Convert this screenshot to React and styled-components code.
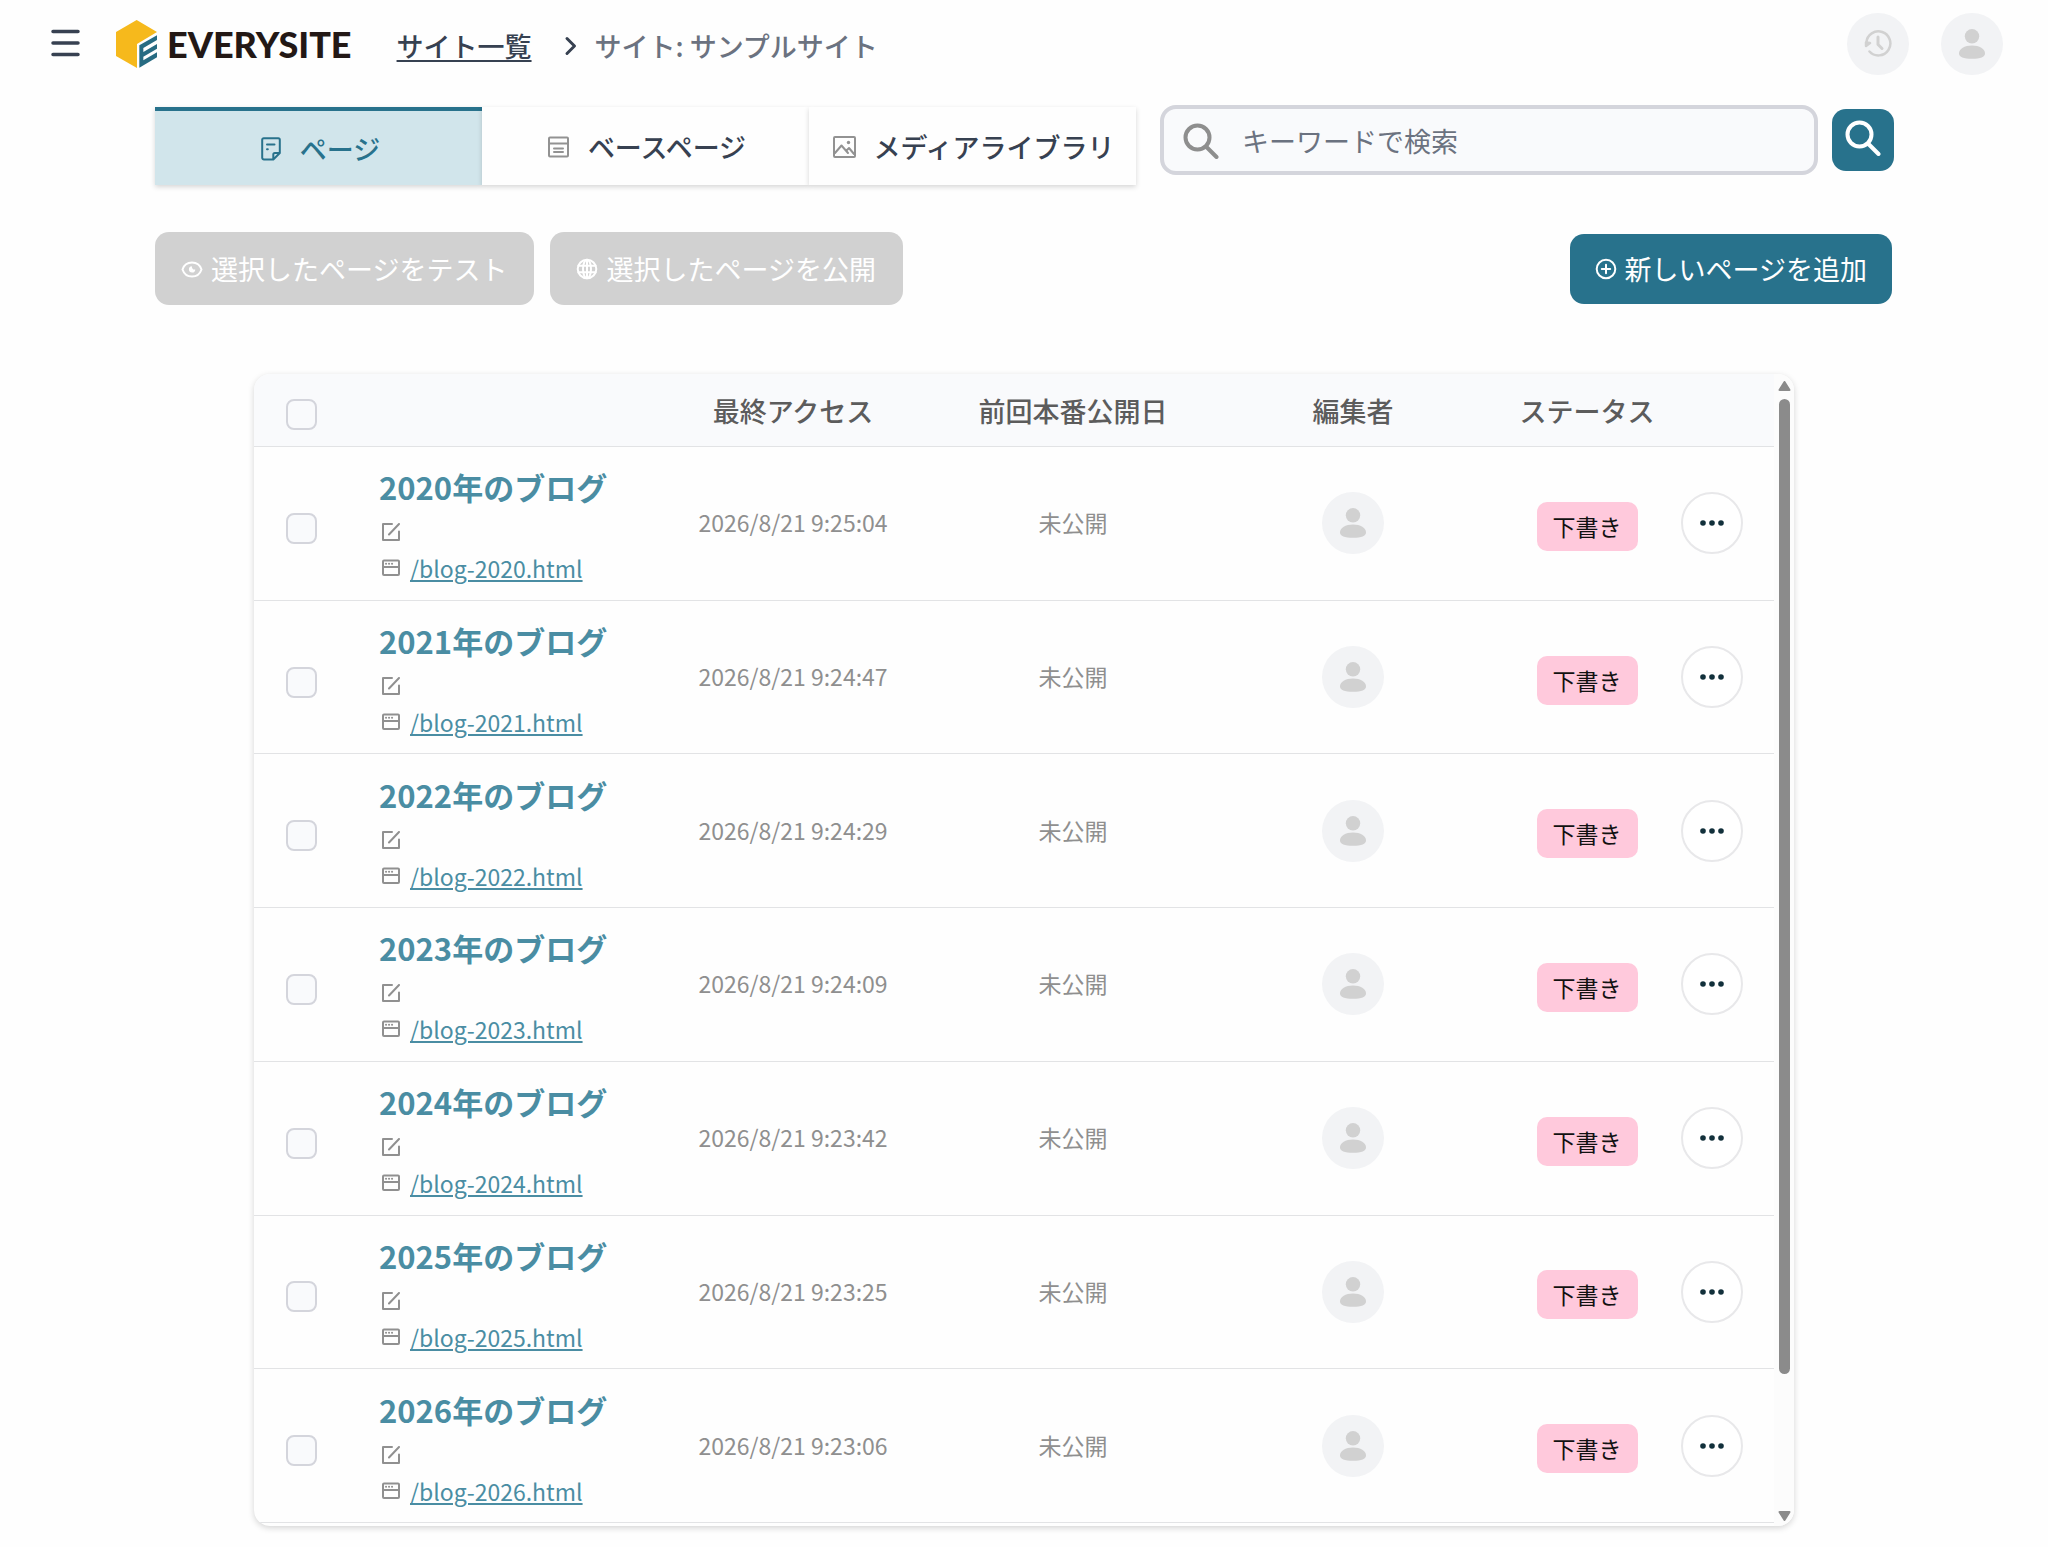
import React from "react";
import styled, { createGlobalStyle, css } from "styled-components";

const color = {
  teal: "#28728c",
  tealSoft: "#d1e5eb",
  link: "#4a8da3",
  ink: "#374151",
  slate: "#6b7280",
  grey: "#8f8f8f",
  disabled: "#d1d1d1",
  surface: "#f9fafc",
  line: "#e8e8ea",
  control: "#d4d5dc",
};

const GlobalStyle = createGlobalStyle`
  *, *::before, *::after { box-sizing: border-box; }
  body {
    margin: 0;
    background: #fefefe;
    color: ${color.ink};
    font-family: "Noto Sans CJK JP", "Noto Sans", sans-serif;
    font-size: 27px;
    line-height: 40px;
  }
  button, input { font: inherit; }
  button { cursor: pointer; }
  svg { display: block; flex: none; }
`;

const Header = styled.header`
  display: flex;
  align-items: center;
  height: 88px;
  padding: 0 45px 0 50px;
`;

const MenuButton = styled.button`
  padding: 0 0 2px;
  border: 0;
  background: none;
  color: ${color.ink};
`;

const Logo = styled.a`
  display: flex;
  align-items: center;
  gap: 10px;
  margin-left: 35px;
  color: #231815;
  font-family: Lato, sans-serif;
  font-size: 36px;
  font-weight: 900;
  line-height: 48px;
  text-decoration: none;
`;

const Breadcrumb = styled.nav`
  display: flex;
  align-items: center;
  margin-left: 45px;
  padding-top: 4px;
  font-weight: 500;
  gap: 18px;
`;

const Crumb = styled.a`
  color: ${color.ink};
  text-decoration: underline;
  text-decoration-thickness: 2px;
  text-underline-offset: 3px;
`;

const CrumbCurrent = styled.span`
  color: ${color.slate};
`;

const HeaderActions = styled.div`
  display: flex;
  gap: 32px;
  margin-left: auto;
`;

const round = css`
  display: flex;
  align-items: center;
  justify-content: center;
  width: 62px;
  height: 62px;
  padding: 0;
  border-radius: 50%;
`;

const RoundButton = styled.button`
  ${round}
  border: 0;
  background: #f2f3f5;
  color: ${color.disabled};
`;

const Avatar = styled.span`
  ${round}
  margin: 0 auto;
  background: #f2f3f5;
  color: ${color.disabled};
`;

const MoreButton = styled.button`
  ${round}
  border: 2px solid ${color.line};
  background: #fff;
  color: #12303b;
`;

const Main = styled.main`
  padding: 17px 154px 20px 155px;
`;

const TopRow = styled.div`
  display: flex;
  align-items: flex-start;
  gap: 24px;
`;

const Tabs = styled.div`
  display: grid;
  grid-template-columns: repeat(3, 1fr);
  flex: 0 1 981px;
  margin-top: 2px;
`;

const Tab = styled.button`
  display: flex;
  align-items: center;
  justify-content: center;
  gap: 17px;
  height: 78px;
  padding: 2px 0 0 2px;
  border: 0;
  border-top: ${(p) => (p.$active ? `4px solid ${color.teal}` : "0")};
  background: ${(p) => (p.$active ? color.tealSoft : "#fefefe")};
  color: ${(p) => (p.$active ? color.teal : color.ink)};
  box-shadow: 0 2px 5px rgba(0, 0, 0, 0.16);
  font-weight: 500;
  white-space: nowrap;

  svg {
    color: ${(p) => (p.$active ? color.teal : "#929292")};
  }
`;

const SearchForm = styled.form`
  display: flex;
  flex: 1;
  align-items: center;
  gap: 14px;
  min-width: 0;
`;

const SearchBox = styled.label`
  display: flex;
  flex: 1;
  align-items: center;
  gap: 23px;
  height: 70px;
  padding: 2px 19px 0;
  border: 4px solid ${color.control};
  border-radius: 16px;
  background: ${color.surface};
  color: #8e8e8e;
`;

const SearchInput = styled.input`
  flex: 1;
  min-width: 0;
  padding: 0;
  border: 0;
  outline: 0;
  background: none;
  color: ${color.ink};

  &::placeholder {
    color: ${color.slate};
    opacity: 1;
  }
`;

const SearchButton = styled.button`
  display: flex;
  align-items: center;
  justify-content: center;
  width: 62px;
  height: 62px;
  padding: 0 0 5px;
  border: 0;
  border-radius: 14px;
  background: ${color.teal};
  color: #fff;
`;

const Toolbar = styled.div`
  display: flex;
  align-items: center;
  gap: 16px;
  margin-top: 47px;
  padding-right: 2px;
`;

const ActionButton = styled.button`
  display: flex;
  align-items: center;
  gap: 8px;
  height: ${(p) => (p.$primary ? 70 : 73)}px;
  margin-left: ${(p) => (p.$primary ? "auto" : 0)};
  padding: 0 ${(p) => (p.$primary ? "25px" : "27px 0 26px")};
  border: 0;
  border-radius: 14px;
  background: ${(p) => (p.$primary ? color.teal : color.disabled)};
  color: #fff;
  white-space: nowrap;
`;

const Card = styled.section`
  display: flex;
  margin: 69px 100px 0 99px;
  border-radius: 16px;
  background: #fefefe;
  box-shadow: 0 2px 6px rgba(0, 0, 0, 0.17);
  overflow: hidden;
`;

const TablePane = styled.div`
  flex: 1;
  min-width: 0;
  padding-bottom: 3px;
`;

const Table = styled.table`
  width: 100%;
  height: 1149px;
  border-collapse: separate;
  border-spacing: 0;
  table-layout: fixed;
`;

const HeadCell = styled.th`
  width: ${(p) => (p.$width ? `${p.$width}px` : "auto")};
  height: 73px;
  padding: ${(p) => (p.$check ? "9px 0 0" : "1px 0 0")};
  border-bottom: 1px solid #e2e3e5;
  background: ${color.surface};
  color: #5c5c5c;
  font-weight: 500;
`;

const Cell = styled.td`
  padding: ${(p) => p.$top || 0}px 0 ${(p) => p.$bottom || 0}px;
  border-bottom: 1px solid #e2e3e5;
  color: ${color.grey};
  font-size: 23px;
  line-height: 36px;
  text-align: center;
`;

const TitleCell = styled(Cell)`
  padding: 17px 0 13px 31px;
  text-align: left;
`;

const Checkbox = styled.input`
  appearance: none;
  display: block;
  width: 31px;
  height: 31px;
  margin: 0 auto;
  border: 2px solid ${color.control};
  border-radius: 8px;
  background: ${color.surface};

  &:checked {
    background: ${color.teal};
  }
`;

const PageTitle = styled.h2`
  margin: 0 0 4px;
  color: ${color.link};
  font-size: 31px;
  font-weight: 700;
  line-height: 46px;
`;

const Meta = styled.div`
  display: flex;
  align-items: center;
  gap: 10px;
  height: 36px;
  padding-left: 3px;
  color: #909090;
`;

const PageLink = styled.a`
  color: ${color.link};
  text-decoration: underline;
  text-decoration-thickness: 2px;
  text-underline-offset: 2px;
`;

const Badge = styled.span`
  display: inline-block;
  padding: 6px 16px 7px;
  border-radius: 10px;
  background: #ffc9dc;
  color: #111;
  vertical-align: middle;
`;

const ScrollTrack = styled.div`
  display: flex;
  flex-direction: column;
  align-items: center;
  width: 20px;
  padding: 7px 0 5px;
  background: #fcfcfc;
  color: #8b8b8b;
`;

const ScrollThumb = styled.div`
  flex: 1;
  width: 11px;
  margin: 8px 0 137px;
  border-radius: 6px;
  background: currentColor;
`;

function Stroke({ size = 24, width = 2, children, height }) {
  return (
    <svg
      width={size}
      height={height || size}
      viewBox={`0 0 ${size} ${height || size}`}
      fill="none"
      stroke="currentColor"
      strokeWidth={width}
      strokeLinecap="round"
      strokeLinejoin="round"
      aria-hidden="true"
    >
      {children}
    </svg>
  );
}

const MenuIcon = () => (
  <Stroke size={31} width={3.5} height={28}>
    <path d="M3 2.5h25M3 14h25M3 25.5h25" />
  </Stroke>
);

const LogoMark = () => (
  <svg width="41" height="48" viewBox="0 0 123 144" aria-hidden="true">
    <path fill="#f6b91c" d="M62 0 123 36 63 72V144L0 108V36Z" />
    <path
      fill="#276b82"
      d="M70 76 123 46V60L82 84V96L123 72V86L82 110V121L123 97V112L70 143Z"
    />
  </svg>
);

const ChevronIcon = () => (
  <Stroke size={27} height={20} width={3}>
    <path d="M17 2.5 24.5 10 17 17.5" />
  </Stroke>
);

const HistoryIcon = () => (
  <Stroke size={28} width={2.5}>
    <path d="M5.5 21.5A12 12 0 1 0 2.4 12.5" />
    <path d="M2 12.5V16L6 13Z" fill="currentColor" />
    <path d="M14 7v7.5l4 4" strokeWidth="3" />
  </Stroke>
);

const UserIcon = () => (
  <svg width="26" height="30" viewBox="0 0 26 30" fill="currentColor" aria-hidden="true">
    <circle cx="13" cy="7.3" r="7.2" />
    <path d="M13 16.5c7.5 0 13 3.4 13 7.8 0 4-4.5 5.5-13 5.5S0 28.3 0 24.3c0-4.4 5.5-7.8 13-7.8Z" />
  </svg>
);

const PageIcon = () => (
  <Stroke>
    <path d="M13.5 22.5H5A1.8 1.8 0 0 1 3.2 20.7V2.8A1.5 1.5 0 0 1 4.7 1.3h14.6a1.5 1.5 0 0 1 1.5 1.5V16l-6.5 6.5V17.5a1.5 1.5 0 0 1 1.5-1.5h4.5" />
    <path d="M8 7.5h7.5M8 12.3h.8" />
  </Stroke>
);

const BasePageIcon = () => (
  <Stroke>
    <rect x="2" y="2.5" width="19" height="19" rx="1" />
    <path d="M2 8.5h19M7 13.5h9M7 17h9" />
  </Stroke>
);

const MediaIcon = () => (
  <Stroke>
    <rect x="2" y="2" width="21" height="20" rx="1" />
    <path d="M3 18l6.5-7.500 6.500 7.500M14.500 15.500l2.500-2.500 5 6" />
    <circle cx="16.500" cy="7.500" r="1.700" fill="currentColor" stroke="none" />
  </Stroke>
);

const SearchIcon = () => (
  <Stroke size={36} width={4}>
    <circle cx="14.500" cy="14.500" r="12" />
    <path d="M23 23.500 33.500 34" />
  </Stroke>
);

const EyeIcon = () => (
  <Stroke size={22}>
    <path d="M1.500 11.500C3 7 6.500 4.500 11 4.500S19 7 20.500 11.500C19 16 15.500 18.500 11 18.500S3 16 1.500 11.500Z" />
    <path
      d="M10.800 8.200a3.200 3.200 0 1 0 3.500 3.300c-2 .5-3.500-1-3.500-3.300Z"
      fill="currentColor"
      stroke="none"
    />
  </Stroke>
);

const GlobeIcon = () => (
  <Stroke size={22}>
    <circle cx="11" cy="11" r="9.300" />
    <ellipse cx="11" cy="11" rx="4" ry="9.300" />
    <path d="M11 2v18M2.500 7.800h17M2.500 14.200h17" />
  </Stroke>
);

const PlusCircleIcon = () => (
  <Stroke size={22}>
    <circle cx="11" cy="11" r="9.300" />
    <path d="M11 6.800v8.400M6.800 11h8.400" />
  </Stroke>
);

const EditIcon = () => (
  <Stroke size={18}>
    <path d="M10 1H1V17H17V8.500M7 11.500 17 1" />
  </Stroke>
);

const WindowIcon = () => (
  <Stroke size={18}>
    <rect x="1" y="1.500" width="16" height="14.500" rx="1" />
    <path d="M1 8h16" />
    <path d="M4 4.700h.1M7 4.700h.1M10 4.700h.1" />
  </Stroke>
);

const DotsIcon = () => (
  <svg width="24" height="6" viewBox="0 0 24 6" fill="currentColor" aria-hidden="true">
    <circle cx="3" cy="3" r="2.800" />
    <circle cx="12" cy="3" r="2.800" />
    <circle cx="21" cy="3" r="2.800" />
  </svg>
);

const ArrowIcon = ({ down }) => (
  <svg width="13" height="10" viewBox="0 0 13 10" aria-hidden="true">
    <path
      fill="currentColor"
      stroke="currentColor"
      strokeWidth="2"
      strokeLinejoin="round"
      d={down ? "M1.500 1h10L6.500 9Z" : "M1.500 9h10L6.500 1Z"}
    />
  </svg>
);

const tabs = [
  { label: "ページ", icon: PageIcon, active: true },
  { label: "ベースページ", icon: BasePageIcon },
  { label: "メディアライブラリ", icon: MediaIcon },
];

const pages = [
  { year: 2020, accessed: "2026/8/21 9:25:04" },
  { year: 2021, accessed: "2026/8/21 9:24:47" },
  { year: 2022, accessed: "2026/8/21 9:24:29" },
  { year: 2023, accessed: "2026/8/21 9:24:09" },
  { year: 2024, accessed: "2026/8/21 9:23:42" },
  { year: 2025, accessed: "2026/8/21 9:23:25" },
  { year: 2026, accessed: "2026/8/21 9:23:06" },
];

function PageRow({ year, accessed }) {
  const title = `${year}年のブログ`;
  return (
    <tr>
      <Cell $top={10}>
        <Checkbox type="checkbox" aria-label={title} />
      </Cell>
      <TitleCell>
        <PageTitle>{title}</PageTitle>
        <Meta>
          <EditIcon />
        </Meta>
        <Meta>
          <WindowIcon />
          <PageLink href={`#blog-${year}`}>{`/blog-${year}.html`}</PageLink>
        </Meta>
      </TitleCell>
      <Cell $bottom={2}>{accessed}</Cell>
      <Cell $bottom={2}>未公開</Cell>
      <Cell>
        <Avatar>
          <UserIcon />
        </Avatar>
      </Cell>
      <Cell $top={6}>
        <Badge>下書き</Badge>
      </Cell>
      <Cell>
        <MoreButton type="button" aria-label="メニュー">
          <DotsIcon />
        </MoreButton>
      </Cell>
    </tr>
  );
}

export default function App() {
  return (
    <>
      <GlobalStyle />
      <Header>
        <MenuButton type="button" aria-label="メニュー">
          <MenuIcon />
        </MenuButton>
        <Logo href="#home">
          <LogoMark />
          EVERYSITE
        </Logo>
        <Breadcrumb>
          <Crumb href="#sites">サイト一覧</Crumb>
          <ChevronIcon />
          <CrumbCurrent>サイト: サンプルサイト</CrumbCurrent>
        </Breadcrumb>
        <HeaderActions>
          <RoundButton type="button" aria-label="履歴">
            <HistoryIcon />
          </RoundButton>
          <RoundButton type="button" aria-label="アカウント">
            <UserIcon />
          </RoundButton>
        </HeaderActions>
      </Header>
      <Main>
        <TopRow>
          <Tabs role="tablist">
            {tabs.map(({ label, icon: Icon, active }) => (
              <Tab key={label} type="button" role="tab" aria-selected={!!active} $active={active}>
                <Icon />
                {label}
              </Tab>
            ))}
          </Tabs>
          <SearchForm onSubmit={(e) => e.preventDefault()}>
            <SearchBox>
              <SearchIcon />
              <SearchInput type="text" placeholder="キーワードで検索" aria-label="キーワードで検索" />
            </SearchBox>
            <SearchButton type="submit" aria-label="検索">
              <SearchIcon />
            </SearchButton>
          </SearchForm>
        </TopRow>
        <Toolbar>
          <ActionButton type="button" disabled>
            <EyeIcon />
            選択したページをテスト
          </ActionButton>
          <ActionButton type="button" disabled>
            <GlobeIcon />
            選択したページを公開
          </ActionButton>
          <ActionButton type="button" $primary>
            <PlusCircleIcon />
            新しいページを追加
          </ActionButton>
        </Toolbar>
        <Card>
          <TablePane>
            <Table>
              <thead>
                <tr>
                  <HeadCell $width={94} $check>
                    <Checkbox type="checkbox" aria-label="すべて選択" />
                  </HeadCell>
                  <HeadCell />
                  <HeadCell $width={280}>最終アクセス</HeadCell>
                  <HeadCell $width={280}>前回本番公開日</HeadCell>
                  <HeadCell $width={280}>編集者</HeadCell>
                  <HeadCell $width={188}>ステータス</HeadCell>
                  <HeadCell $width={93} />
                </tr>
              </thead>
              <tbody>
                {pages.map((page) => (
                  <PageRow key={page.year} {...page} />
                ))}
              </tbody>
            </Table>
          </TablePane>
          <ScrollTrack>
            <ArrowIcon />
            <ScrollThumb />
            <ArrowIcon down />
          </ScrollTrack>
        </Card>
      </Main>
    </>
  );
}
